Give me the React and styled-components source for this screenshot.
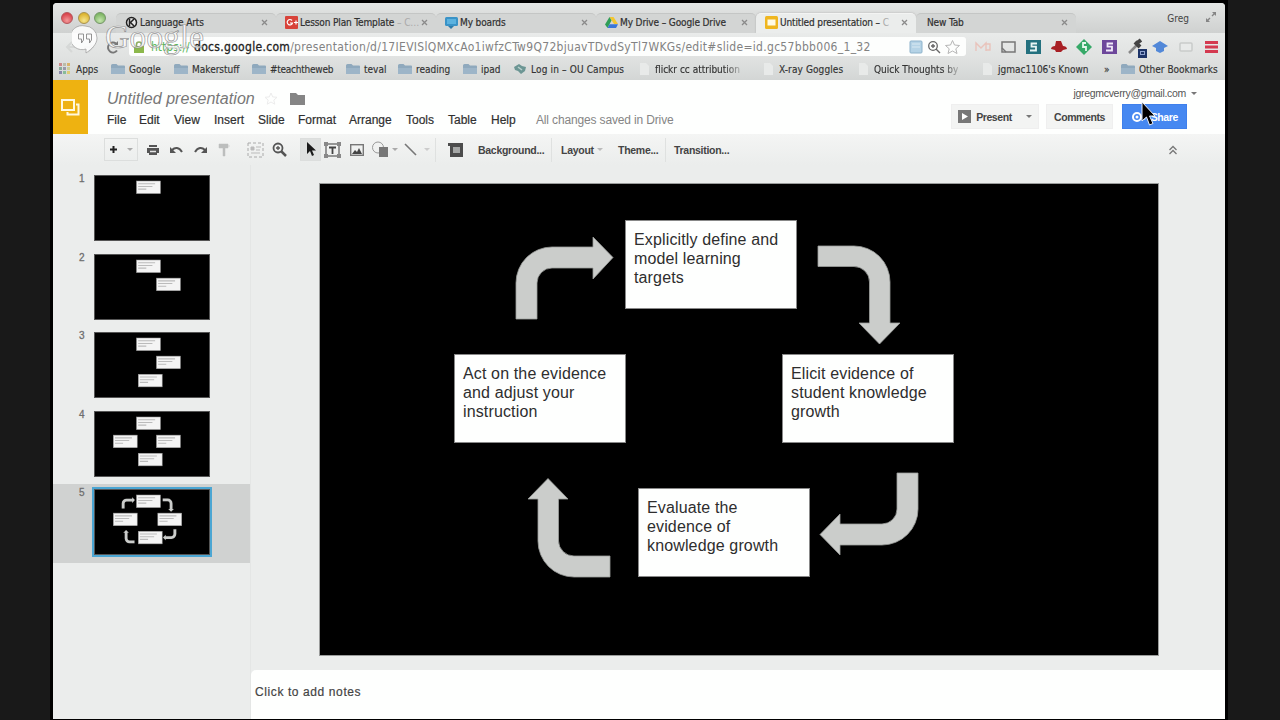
import styled, { createGlobalStyle } from 'styled-components'

const GlobalStyle = createGlobalStyle`
   * {
      box-sizing: border-box;
   }
   body {
      margin: 0;
      background: #191919;
      overflow: hidden;
   }
`

const chromeFont = `'DejaVu Sans Condensed', 'DejaVu Sans', sans-serif`
const docsFont = `'Liberation Sans', Arial, sans-serif`

const Stage = styled.div`
   position: relative;
   width: 1280px;
   height: 720px;
   padding: 0 52px 0 50px;
   background: #191919;
`

const Screen = styled.div`
   display: flex;
   flex-direction: column;
   height: 720px;
   padding: 3px 3px 1px;
   background: #000;
`

// ---------- browser ----------
const Chrome = styled.div`
   display: flex;
   flex-direction: column;
   height: 77px;
   border-radius: 4px 4px 0 0;
   overflow: hidden;
   background: #d9dbda;
   font-family: ${chromeFont};
   color: #333;
`

const TabStrip = styled.div`
   display: flex;
   height: 30px;
   background: linear-gradient(#e3e5e4, #cfd1d0);
`

const Lights = styled.div`
   display: flex;
   gap: 4.5px;
   width: 63px;
   padding: 9px 0 0 8px;
`

const Light = styled.i`
   width: 12px;
   height: 12px;
   border-radius: 50%;
   border: 1px solid ${(props) => props.$edge};
   background: radial-gradient(circle at 50% 75%, ${(props) => props.$glow}, ${(props) => props.$color} 75%);
`

const Tab = styled.div`
   display: flex;
   align-items: center;
   width: 160px;
   height: 20px;
   margin-top: 10px;
   padding: 0 8px 3px 9px;
   font-size: 10px;
   letter-spacing: -0.12px;
   white-space: nowrap;
   color: #303030;
   background: ${(props) => (props.$active ? '#ebedec' : '#d3d5d4')};
   border-top: 1px solid ${(props) => (props.$active ? '#f3f4f3' : '#c4c6c5')};
   border-radius: 5px 5px 0 0;
   box-shadow: ${(props) => (props.$active ? '0 0 2px #aaa' : 'none')};
`

const TabTitle = styled.span`
   flex: 1;
   margin-left: 2px;
   overflow: hidden;
   -webkit-text-stroke: 0.2px #303030;

   em {
      font-style: normal;
      color: #aaa;
      -webkit-text-stroke: 0;
   }
`

const UserName = styled.span`
   margin-left: auto;
   padding-top: 10px;
   font-size: 10px;
   color: #444;
`

const Expand = styled.svg`
   margin: 8px 8px 0 16px;
`

const AddressRow = styled.div`
   display: flex;
   align-items: center;
   height: 27px;
   padding-left: 9px;
   background: linear-gradient(#e9ebea, #dfe1e0);
`

const NavIcons = styled.svg`
   flex: none;
   margin-right: 4px;
`

const Omnibox = styled.div`
   display: flex;
   align-items: center;
   width: 837px;
   height: 19px;
   padding: 0 4px;
   border-radius: 3px;
   background: #fdfefd;
   font-size: 12px;
   white-space: nowrap;
`

const Url = styled.span`
   flex: 1;
   margin-left: 6px;
   letter-spacing: 0.31px;
   color: #828282;

   i {
      display: inline-block;
      width: 43px;
      font-style: normal;
      letter-spacing: 0;
      color: #5cb85c;
   }
   b {
      font-weight: normal;
      color: #222;
      -webkit-text-stroke: 0.3px #222;
   }
`

const BookmarkBar = styled.div`
   display: flex;
   align-items: center;
   height: 20px;
   padding: 0 0 2px 6px;
   background: linear-gradient(#dfe1e0, #d3d6d5);
   font-size: 10px;
   color: #333;
`

const Bookmark = styled.div`
   display: flex;
   align-items: center;
   gap: 4px;
   flex: 0 0 ${(props) => props.$w}px;
   letter-spacing: ${(props) => props.$ls || 0}px;
   white-space: nowrap;
   -webkit-text-stroke: 0.15px #333;

   svg {
      flex: none;
   }
`

const BookmarkText = styled.span`
   mask-image: ${(props) => (props.$fade ? 'linear-gradient(90deg, #000 82%, rgba(0, 0, 0, 0.25))' : 'none')};
`

// ---------- document header ----------
const DocHeader = styled.div`
   display: flex;
   height: 54px;
   background: #fefffe;
   font-family: ${docsFont};
`

const Logo = styled.div`
   display: flex;
   width: 35px;
   align-items: center;
   justify-content: center;
   background: #eeb211;
`

const DocInfo = styled.div`
   flex: 1;
   padding: 8px 0 0 19px;
`

const TitleRow = styled.div`
   display: flex;
   align-items: center;
   height: 21px;
   font-size: 16px;
   font-style: italic;
   letter-spacing: 0.05px;
   color: #777;

   svg:first-of-type {
      margin: 0 12px 0 9px;
   }
`

const MenuRow = styled.div`
   display: flex;
   align-items: center;
   height: 22px;
   font-size: 12px;
   color: #303030;
   -webkit-text-stroke: 0.2px #303030;
`

const MenuItem = styled.span`
   width: ${(props) => props.$w}px;
`

const SaveState = styled.span`
   letter-spacing: -0.15px;
   white-space: nowrap;
   color: #858585;
   -webkit-text-stroke: 0;
`

const Account = styled.div`
   display: flex;
   flex-direction: column;
   width: 274px;
   padding-top: 6px;
`

const Email = styled.div`
   display: flex;
   align-items: center;
   justify-content: flex-end;
   height: 14px;
   padding-right: 28px;
   font-size: 10.5px;
   letter-spacing: -0.3px;
   color: #555;
`

const Buttons = styled.div`
   display: flex;
   gap: 7px;
   margin-top: 4px;
`

const Button = styled.div`
   display: flex;
   align-items: center;
   justify-content: center;
   width: ${(props) => props.$w}px;
   height: 25px;
   margin-left: ${(props) => props.$ml || 0}px;
   border: 1px solid ${(props) => (props.$blue ? '#3f80ec' : '#efefef')};
   background: ${(props) => (props.$blue ? '#4688f1' : '#f3f4f3')};
   color: ${(props) => (props.$blue ? '#fff' : '#444')};
   font-size: 10.5px;
   font-weight: bold;
   letter-spacing: -0.4px;
`

const Caret = styled.i`
   width: 0;
   height: 0;
   margin-left: ${(props) => props.$ml || 0}px;
   border: 3px solid transparent;
   border-top-color: ${(props) => props.$color || '#777'};
   border-bottom: 0;
`

const Toolbar = styled.div`
   display: flex;
   align-items: center;
   height: 31px;
   padding-left: 51px;
   background: linear-gradient(#f4f5f4, #ebedec);
   font-family: ${docsFont};
   font-size: 10.5px;
   font-weight: bold;
   color: #444;
`

const Tool = styled.div`
   display: flex;
   align-items: center;
   justify-content: ${(props) => (props.$left ? 'flex-start' : 'center')};
   flex: 0 0 ${(props) => props.$w}px;
   height: 23px;
   margin-left: ${(props) => props.$ml || 0}px;
   border: 1px solid ${(props) => (props.$box ? '#dcdedd' : 'transparent')};
   background: ${(props) => (props.$on ? '#dfe1e0' : 'transparent')};
   letter-spacing: -0.28px;
   white-space: nowrap;
`

const Divider = styled.i`
   width: 1px;
   height: 24px;
   background: #dfe1e0;
`

const Collapse = styled.svg`
   margin: 0 47px 0 auto;
`

// ---------- editor ----------
const Workspace = styled.div`
   display: flex;
   flex: 1;
   background: #ebedec;
   font-family: ${docsFont};
`

const Filmstrip = styled.div`
   width: 198px;
   padding-top: 5px;
   border-right: 1px solid #e4e6e5;
`

const FilmRow = styled.div`
   display: flex;
   height: 78.5px;
   padding: 5px 0 0 26px;
   background: ${(props) => (props.$active ? '#d0d2d1' : 'transparent')};
`

const FilmNumber = styled.span`
   width: 15px;
   font-size: 10px;
   line-height: 7px;
   color: #666;
   -webkit-text-stroke: 0.3px #777;
`

const Thumb = styled.svg`
   width: 116px;
   height: 66px;
   background: #000;
   border: 1px solid #555;
   outline: ${(props) => (props.$active ? '2px solid #4ba6d3' : 'none')};
`

const Editor = styled.div`
   display: flex;
   flex-direction: column;
   flex: 1;
`

const Canvas = styled.div`
   flex: 1;
   padding: 18px 0 0 68px;
`

const Slide = styled.div`
   position: relative;
   width: 840px;
   height: 473px;
   background: #000;
   outline: 1px solid #9a9c9b;
   outline-offset: -1px;
`

const Arrows = styled.svg`
   position: absolute;
   left: 0;
   top: 0;
`

const Card = styled.div`
   position: absolute;
   left: ${(props) => props.$x}px;
   top: ${(props) => props.$y}px;
   width: 172px;
   height: 89px;
   padding: 8.5px 8px;
   border: 1px solid #888;
   background: #fefffe;
   font-size: 16px;
   line-height: 19.2px;
   letter-spacing: 0.14px;
   white-space: pre-line;
   color: #2e2e2e;
`

const Notes = styled.div`
   height: 49px;
   padding: 15px 4px;
   border-radius: 5px 0 0 0;
   background: #fefffe;
   font-size: 12px;
   letter-spacing: 0.6px;
   color: #444;
   -webkit-text-stroke: 0.2px #444;
`

// ---------- overlays ----------
const Watermark = styled.div`
   position: absolute;
   left: 72px;
   top: 18px;
   display: flex;
   align-items: center;
   font-family: 'Liberation Serif', serif;
   font-size: 34px;
   line-height: 38px;
   letter-spacing: -0.2px;
   color: rgba(250, 250, 250, 0.8);
   -webkit-text-stroke: 0.7px rgba(125, 125, 125, 0.8);

   svg {
      margin: 5px 7px 0 0;
   }
`

const Pointer = styled.svg`
   position: absolute;
   left: 1140px;
   top: 101px;
`

const cards = [
   { x: 306, y: 37, text: 'Explicitly define and\nmodel learning\ntargets' },
   { x: 463, y: 171, text: 'Elicit evidence of\nstudent knowledge\ngrowth' },
   { x: 319, y: 305, text: 'Evaluate the\nevidence of\nknowledge growth' },
   { x: 135, y: 171, text: 'Act on the evidence\nand adjust your\ninstruction' },
]

const arrows = [
   'M197 136V100A36 36 0 0 1 233 64H274V54L294 74.5L274 96V85H233A15 15 0 0 0 218 100V136Z',
   'M499 63H535A36 36 0 0 1 571 99V140H581L560.5 161L540 140H550.5V99A15.5 15.5 0 0 0 535 83.5H499Z',
   'M599 290V326A36 36 0 0 1 563 362H521V372L501 351.5L521 331V341H563A15 15 0 0 0 578 326V290Z',
   'M291 394H255A36 36 0 0 1 219 358V316H209L229 295.5L249 316H239.5V358A15.5 15.5 0 0 0 255 373H291Z',
]

const arrowPaths = arrows.map((d) => <path key={d} d={d} fill="#cbcdcb" stroke="#9c9e9c" strokeWidth="0.8" />)

const Thumbnail = ({ count, active }) => (
   <Thumb $active={active} viewBox="0 0 840 473" preserveAspectRatio="none">
      {cards.slice(0, count).map((c, i) => {
         // the second card was nudged right on the last slide
         const x = c.x - (i === 1 && !active ? 10 : 0)
         return (
            <g key={c.text}>
               <rect x={x} y={c.y} width="176" height="93" fill="#f4f4f4" stroke="#999" strokeWidth="4" />
               <path d={`M${x + 12} ${c.y + 20}h125M${x + 12} ${c.y + 40}h105M${x + 12} ${c.y + 60}h60`} stroke="#bbb" strokeWidth="8" />
            </g>
         )
      })}
      {active && arrowPaths}
   </Thumb>
)

const Favicon = ({ name }) => (
   <svg width="13" height="13" viewBox="0 0 13 13">
      {name === 'kde' && (
         <>
            <circle cx="6.5" cy="6.5" r="5" fill="#e6e6e6" stroke="#222" strokeWidth="1.5" />
            <path d="M4.5 3v7M9 3L5.5 6.5L9 10" stroke="#222" strokeWidth="1.5" fill="none" />
         </>
      )}
      {name === 'plus' && (
         <>
            <rect width="13" height="13" rx="1" fill="#d8433a" />
            <path d="M7 4.5a2.7 2.7 0 1 0 .5 2.5H5M9 6.5h4M11 4.5v4" stroke="#fff" strokeWidth="1.2" fill="none" />
         </>
      )}
      {name === 'board' && (
         <>
            <rect y="1" width="13" height="9" rx="1.5" fill="#3993c7" />
            <rect x="2" y="3" width="9" height="5" fill="#5bb2df" />
            <path d="M3 10h6l-3 3z" fill="#2e7ba9" />
         </>
      )}
      {name === 'drive' && (
         <>
            <path d="M4.5 1h4l4.5 7H9z" fill="#f3c62f" />
            <path d="M4.5 1L6.5 4.5L2.5 12L0 8.5z" fill="#2f9e57" />
            <path d="M4.5 8.3H13L11 12H2.5z" fill="#3a76d8" />
         </>
      )}
      {name === 'slides' && (
         <>
            <rect width="13" height="13" rx="1.5" fill="#efb620" />
            <rect x="2.5" y="3.5" width="8" height="6" fill="#fffbe6" />
         </>
      )}
   </svg>
)

const CloseMark = () => (
   <svg width="7" height="7" viewBox="0 0 7 7">
      <path d="M1 1l5 5M6 1L1 6" stroke="#8a8a8a" strokeWidth="1.3" />
   </svg>
)

const BookmarkIcon = ({ kind }) => {
   if (kind === 'apps') {
      const colors = ['#c88', '#bba', '#d9b36a', '#8a9', '#99a', '#cc9', '#88a', '#8b9', '#dc7']
      return (
         <svg width="13" height="12">
            {colors.map((c, i) => (
               <rect key={i} x={(i % 3) * 4} y={Math.floor(i / 3) * 4} width="3" height="3" fill={c} />
            ))}
         </svg>
      )
   }
   if (kind === 'folder')
      return (
         <svg width="14" height="12">
            <path d="M0 2.5a1.5 1.5 0 0 1 1.5-1.5h4l1.5 1.5h6a1 1 0 0 1 1 1V11H0z" fill="#8fa9bd" />
            <path d="M0 5h14v6H0z" fill="#9db5c8" />
         </svg>
      )
   if (kind === 'campus')
      return (
         <svg width="13" height="12">
            <path d="M0 4L5 1l3 2 4 1-1 4-4 3-3-3-3-1z" fill="#6c9694" />
            <path d="M4 4l4 3" stroke="#b9d0cd" strokeWidth="1.5" />
         </svg>
      )
   return (
      <svg width="13" height="12">
         <path d="M2 0h6l3 3v9H2z" fill="#e8eae9" />
      </svg>
   )
}

const tabs = [
   { icon: 'kde', title: 'Language Arts' },
   { icon: 'plus', title: 'Lesson Plan Template', rest: ' – C…' },
   { icon: 'board', title: 'My boards' },
   { icon: 'drive', title: 'My Drive – Google Drive' },
   { icon: 'slides', title: 'Untitled presentation –', rest: ' C', active: true },
   { title: 'New Tab' },
]

const bookmarks = [
   { w: 52, icon: 'apps', text: 'Apps' },
   { w: 63, icon: 'folder', text: 'Google' },
   { w: 78, icon: 'folder', text: 'Makerstuff' },
   { w: 94, icon: 'folder', text: '#teachtheweb', ls: -0.25 },
   { w: 52, icon: 'folder', text: 'teval' },
   { w: 65, icon: 'folder', text: 'reading' },
   { w: 51, icon: 'folder', text: 'ipad' },
   { w: 124, icon: 'campus', text: 'Log in – OU Campus', ls: 0.15 },
   { w: 124, icon: 'page', text: 'flickr cc attribution', fade: true },
   { w: 95, icon: 'page', text: 'X-ray Goggles', ls: 0.1 },
   { w: 124, icon: 'page', text: 'Quick Thoughts by', fade: true },
   { w: 123, icon: 'page', text: "jgmac1106's Known" },
]

const menus = [
   ['File', 32],
   ['Edit', 35],
   ['View', 40],
   ['Insert', 44],
   ['Slide', 40],
   ['Format', 51],
   ['Arrange', 57],
   ['Tools', 42],
   ['Table', 43],
   ['Help', 45],
]

const Browser = () => (
   <Chrome>
      <TabStrip>
         <Lights>
            <Light $color="#d9444c" $glow="#f29a9a" $edge="#b4555a" />
            <Light $color="#dcb32f" $glow="#f5e58c" $edge="#a8924d" />
            <Light $color="#7db563" $glow="#c5e6ae" $edge="#749568" />
         </Lights>
         {tabs.map((t) => (
            <Tab key={t.title} $active={t.active}>
               {t.icon && <Favicon name={t.icon} />}
               <TabTitle>
                  {t.title}
                  {t.rest && <em>{t.rest}</em>}
               </TabTitle>
               <CloseMark />
            </Tab>
         ))}
         <UserName>Greg</UserName>
         <Expand width="12" height="12" viewBox="0 0 12 12">
            <path d="M7 1h4v4zM1 7v4h4z" fill="#858585" />
            <path d="M7 5l3-3M2 10l3-3" stroke="#858585" strokeWidth="1.4" />
         </Expand>
      </TabStrip>
      <AddressRow>
         <NavIcons width="63" height="20" viewBox="0 0 63 20" fill="none" strokeWidth="2">
            <path d="M10 5L5 10l5 5M5 10h9M26 5l5 5-5 5M31 10h-9" stroke="#d6d8d7" />
            <path d="M55 13.5a5 5 0 1 1-1-7" stroke="#777" />
            <path d="M56 4v4h-4z" fill="#777" />
         </NavIcons>
         <Omnibox>
            <svg width="12" height="14" viewBox="0 0 12 14">
               <path d="M3.5 7V4.5a2.5 2.5 0 0 1 5 0V7" fill="none" stroke="#8fae5f" strokeWidth="1.6" />
               <rect x="1" y="6" width="10" height="7" fill="#8cb84b" />
            </svg>
            <Url>
               <i>https://</i>
               <b>docs.google.com</b>
               /presentation/d/17IEVISlQMXcAo1iwfzCTw9Q72bjuavTDvdSyTl7WKGs/edit#slide=id.gc57bbb006_1_32
            </Url>
            <svg width="54" height="16" viewBox="0 0 54 16" fill="none">
               <rect x="2" y="2" width="12" height="12" rx="1" fill="#b5d3e6" stroke="#8db2cb" />
               <path d="M4 5h8M4 8h8" stroke="#d9e9f2" />
               <circle cx="25" cy="7" r="4.3" stroke="#666" strokeWidth="1.3" />
               <path d="M23 7h4M25 5v4M28 10l4 4" stroke="#666" strokeWidth="1.4" />
               <path d="M44.5 1.5l2 4.5 5 .5-3.7 3.3 1.2 4.7-4.5-2.5-4.5 2.5 1.2-4.7L37.5 6.500l5-.5z" stroke="#b5b5b5" />
            </svg>
         </Omnibox>
         <svg width="256" height="22" viewBox="0 0 256 22" fill="none">
            <path d="M10 15V7l5 5 5-5v8M20 8h4v6h-4" stroke="#e9c3bb" strokeWidth="1.4" />
            <rect x="36" y="6" width="13" height="10" stroke="#777" strokeWidth="1.5" />
            <path d="M36 12l4 4" stroke="#777" strokeWidth="1.5" />
            <rect x="60" y="4" width="15" height="14" fill="#24717f" />
            <path d="M71 7.5h-5.500v3.200h4.500v3.800h-6" stroke="#e8f5f5" strokeWidth="1.8" />
            <path d="M85 13c0-2 2-3 4-3l1-5h5l2 5c2 0 4 1 4 3l-4 1-2 2h-5l-1-2z" fill="#a82025" />
            <path d="M118 3l8 8-8 8-8-8z" fill="#36a968" />
            <path d="M120 7h-3v4h3v4" stroke="#e5f7ec" strokeWidth="1.8" />
            <rect x="136" y="4" width="15" height="14" fill="#6d479b" />
            <path d="M147 7.5h-5.500v3.200h4.500v3.800h-6" stroke="#f1eafa" strokeWidth="1.8" />
            <path d="M163 17l8-8" stroke="#888" strokeWidth="2.5" />
            <path d="M169 6l5 5M171 7l4-3" stroke="#444" strokeWidth="4" />
            <rect x="172" y="13" width="9" height="9" fill="#1d3468" />
            <rect x="174.500" y="15.500" width="4" height="3" stroke="#8fa3cf" />
            <path d="M186 10l8-5 8 5-4 2v3l-4 2-4-2v-3z" fill="#5288d8" />
            <rect x="214" y="7" width="12" height="8" rx="1" fill="#e8eae9" stroke="#c9cbca" strokeWidth="1.5" />
            <path d="M239 6.500h13M239 11h13M239 15.500h13" stroke="#d43a50" strokeWidth="2.8" />
         </svg>
      </AddressRow>
      <BookmarkBar>
         {bookmarks.map((b) => (
            <Bookmark key={b.text} $w={b.w} $ls={b.ls}>
               <BookmarkIcon kind={b.icon} />
               <BookmarkText $fade={b.fade}>{b.text}</BookmarkText>
            </Bookmark>
         ))}
         <Bookmark $w={17}>»</Bookmark>
         <Bookmark $w={100}>
            <BookmarkIcon kind="folder" />
            Other Bookmarks
         </Bookmark>
      </BookmarkBar>
   </Chrome>
)

const Header = () => (
   <DocHeader>
      <Logo>
         <svg width="21" height="19" viewBox="0 0 21 19" fill="none" stroke="#fff8df" strokeWidth="2">
            <rect x="2" y="2" width="12" height="10" />
            <path d="M16 6.500h2.500V16.500H7.500V14" />
         </svg>
      </Logo>
      <DocInfo>
         <TitleRow>
            Untitled presentation
            <svg width="14" height="13" viewBox="0 0 14 13">
               <path d="M7 1l1.700 3.900 4.300.4-3.200 2.800 1 4.100L7 10l-3.800 2.200 1-4.100L1 5.300l4.300-.4z" fill="none" stroke="#ececec" />
            </svg>
            <svg width="16" height="12">
               <path d="M0 0h6l2 2h7v10H0z" fill="#858585" />
            </svg>
         </TitleRow>
         <MenuRow>
            {menus.map(([name, w]) => (
               <MenuItem key={name} $w={w}>
                  {name}
               </MenuItem>
            ))}
            <SaveState>All changes saved in Drive</SaveState>
         </MenuRow>
      </DocInfo>
      <Account>
         <Email>
            jgregmcverry@gmail.com
            <Caret $ml={5} />
         </Email>
         <Buttons>
            <Button $w={88}>
               <svg width="13" height="13">
                  <rect width="13" height="13" fill="#777" />
                  <path d="M4 3l6 3.500L4 10z" fill="#fff" />
               </svg>
               <span>&nbsp;&nbsp;Present</span>
               <Caret $ml={14} />
            </Button>
            <Button $w={67}>Comments</Button>
            <Button $w={65} $ml={2} $blue>
               <svg width="17" height="12" viewBox="0 0 17 12">
                  <circle cx="6" cy="6" r="4" fill="none" stroke="#fff" strokeWidth="2" />
                  <circle cx="6" cy="6" r="1.5" fill="#fff" />
                  <path d="M11 6h5M13.500 3.500v5" stroke="#fff" strokeWidth="1.500" />
               </svg>
               &nbsp;Share
            </Button>
         </Buttons>
      </Account>
   </DocHeader>
)

const Tools = () => (
   <Toolbar>
      <Tool $w={34} $box>
         <svg width="9" height="9">
            <path d="M4.500 1v7M1 4.500h7" stroke="#222" strokeWidth="2" />
         </svg>
         <Caret $ml={9} $color="#aaa" />
      </Tool>
      <Tool $w={30}>
         <svg width="14" height="12">
            <path d="M3 1h8v2H3zM1 4h12v5h-2v2H3V9H1z" fill="#555" />
            <path d="M4 7.500h6" stroke="#e5e5e5" strokeWidth="1.5" />
         </svg>
      </Tool>
      <Tool $w={16}>
         <svg width="14" height="10" fill="none">
            <path d="M3 5C6 2 10 2 13 7" stroke="#555" strokeWidth="2" />
            <path d="M1 2v6h6z" fill="#555" />
         </svg>
      </Tool>
      <Tool $w={33}>
         <svg width="14" height="10" fill="none">
            <path d="M11 5C8 2 4 2 1 7" stroke="#555" strokeWidth="2" />
            <path d="M13 2v6H7z" fill="#555" />
         </svg>
      </Tool>
      <Tool $w={14}>
         <svg width="12" height="14">
            <path d="M1 1h9v4H1zM10 3h2M5 5h2v8H5z" fill="#bcbebd" stroke="#bcbebd" strokeWidth="0.5" />
         </svg>
      </Tool>
      <Tool $w={32} $ml={8}>
         <svg width="17" height="16">
            <rect x="1" y="1" width="15" height="14" fill="none" stroke="#aaa" strokeDasharray="3 2" />
            <path d="M4 5h3v3H4zM9 5h5M9 8h4M4 11h9" fill="#bbb" stroke="#bbb" />
         </svg>
      </Tool>
      <Tool $w={17}>
         <svg width="15" height="15" viewBox="0 0 15 15" fill="none" stroke="#555">
            <circle cx="6" cy="6" r="4.500" strokeWidth="1.8" />
            <path d="M4 6h4M6 4v4" strokeWidth="1.3" />
            <path d="M9 9l5 5" strokeWidth="2.5" />
         </svg>
      </Tool>
      <Tool $w={21} $ml={12} $box $on>
         <svg width="10" height="15">
            <path d="M1 0v12l3-3 2 5 2-1-2-4.500h4z" fill="#1b1b1b" />
         </svg>
      </Tool>
      <Tool $w={23}>
         <svg width="17" height="16" fill="none">
            <rect x="2" y="2" width="13" height="12" stroke="#666" strokeWidth="1.3" />
            <path d="M5 5.500h7M8.500 5.500V12" stroke="#444" strokeWidth="1.8" />
            <path d="M0 0h4v4H0zM13 0h4v4h-4zM0 12h4v4H0zM13 12h4v4h-4z" fill="#888" />
         </svg>
      </Tool>
      <Tool $w={25}>
         <svg width="14" height="12">
            <rect x="0.700" y="0.700" width="12.600" height="10.600" fill="none" stroke="#777" strokeWidth="1.4" />
            <path d="M2 10l3-4 2 2 2-4 3 6z" fill="#444" />
         </svg>
      </Tool>
      <Tool $w={30}>
         <svg width="18" height="17">
            <circle cx="7" cy="6.500" r="5.500" fill="none" stroke="#999" />
            <rect x="8" y="6" width="9" height="10" fill="#777" />
         </svg>
         <Caret $ml={3} $color="#aaa" />
      </Tool>
      <Tool $w={36}>
         <svg width="13" height="13">
            <path d="M1 1l11 11" stroke="#777" strokeWidth="1.6" />
         </svg>
         <Caret $ml={7} $color="#ccc" />
      </Tool>
      <Divider />
      <Tool $w={38}>
         <svg width="15" height="14">
            <path d="M0 0h15v14H2V3H0z" fill="#4c4c4c" />
            <rect x="5" y="4" width="7" height="6" fill="#a5a7a6" />
         </svg>
      </Tool>
      <Tool $w={74} $ml={3} $left>
         Background...
      </Tool>
      <Divider />
      <Tool $w={57} $ml={8} $left>
         Layout
         <Caret $ml={3} $color="#bbb" />
      </Tool>
      <Tool $w={48} $left>
         Theme...
      </Tool>
      <Divider />
      <Tool $w={70} $ml={7} $left>
         Transition...
      </Tool>
      <Collapse width="10" height="10" fill="none" stroke="#777" strokeWidth="1.3">
         <path d="M1.500 5L5 1.500 8.500 5M1.500 9L5 5.500 8.500 9" />
      </Collapse>
   </Toolbar>
)

function App() {
   return (
      <Stage>
         <GlobalStyle />
         <Screen>
            <Browser />
            <Header />
            <Tools />
            <Workspace>
               <Filmstrip>
                  {[1, 2, 3, 4, 5].map((n) => (
                     <FilmRow key={n} $active={n === 5}>
                        <FilmNumber>{n}</FilmNumber>
                        <Thumbnail count={n} active={n === 5} />
                     </FilmRow>
                  ))}
               </Filmstrip>
               <Editor>
                  <Canvas>
                     <Slide>
                        <Arrows width="840" height="473">
                           {arrowPaths}
                        </Arrows>
                        {cards.map((c) => (
                           <Card key={c.text} $x={c.x} $y={c.y}>
                              {c.text}
                           </Card>
                        ))}
                     </Slide>
                  </Canvas>
                  <Notes>Click to add notes</Notes>
               </Editor>
            </Workspace>
         </Screen>
         <Watermark>
            <svg width="26" height="29" viewBox="0 0 26 29">
               <path d="M13 1a12 12 0 0 1 12 12c0 6-5 11-11 15v-4A12 12 0 1 1 13 1z" fill="#fff" fillOpacity="0.85" stroke="#999" strokeWidth="0.7" />
               <path d="M6.500 9h5v6l-2 3v-4h-3zM14.500 9h5v6l-2 3v-4h-3z" fill="#fafafa" stroke="#888" strokeWidth="0.9" />
            </svg>
            Google
         </Watermark>
         <Pointer width="17" height="26" viewBox="0 0 17 26">
            <path d="M2 1v19l4.500-4 3 8 3.500-1.500-3.500-7.500H15z" fill="#000" stroke="#e9eefa" />
         </Pointer>
      </Stage>
   )
}

export default App
